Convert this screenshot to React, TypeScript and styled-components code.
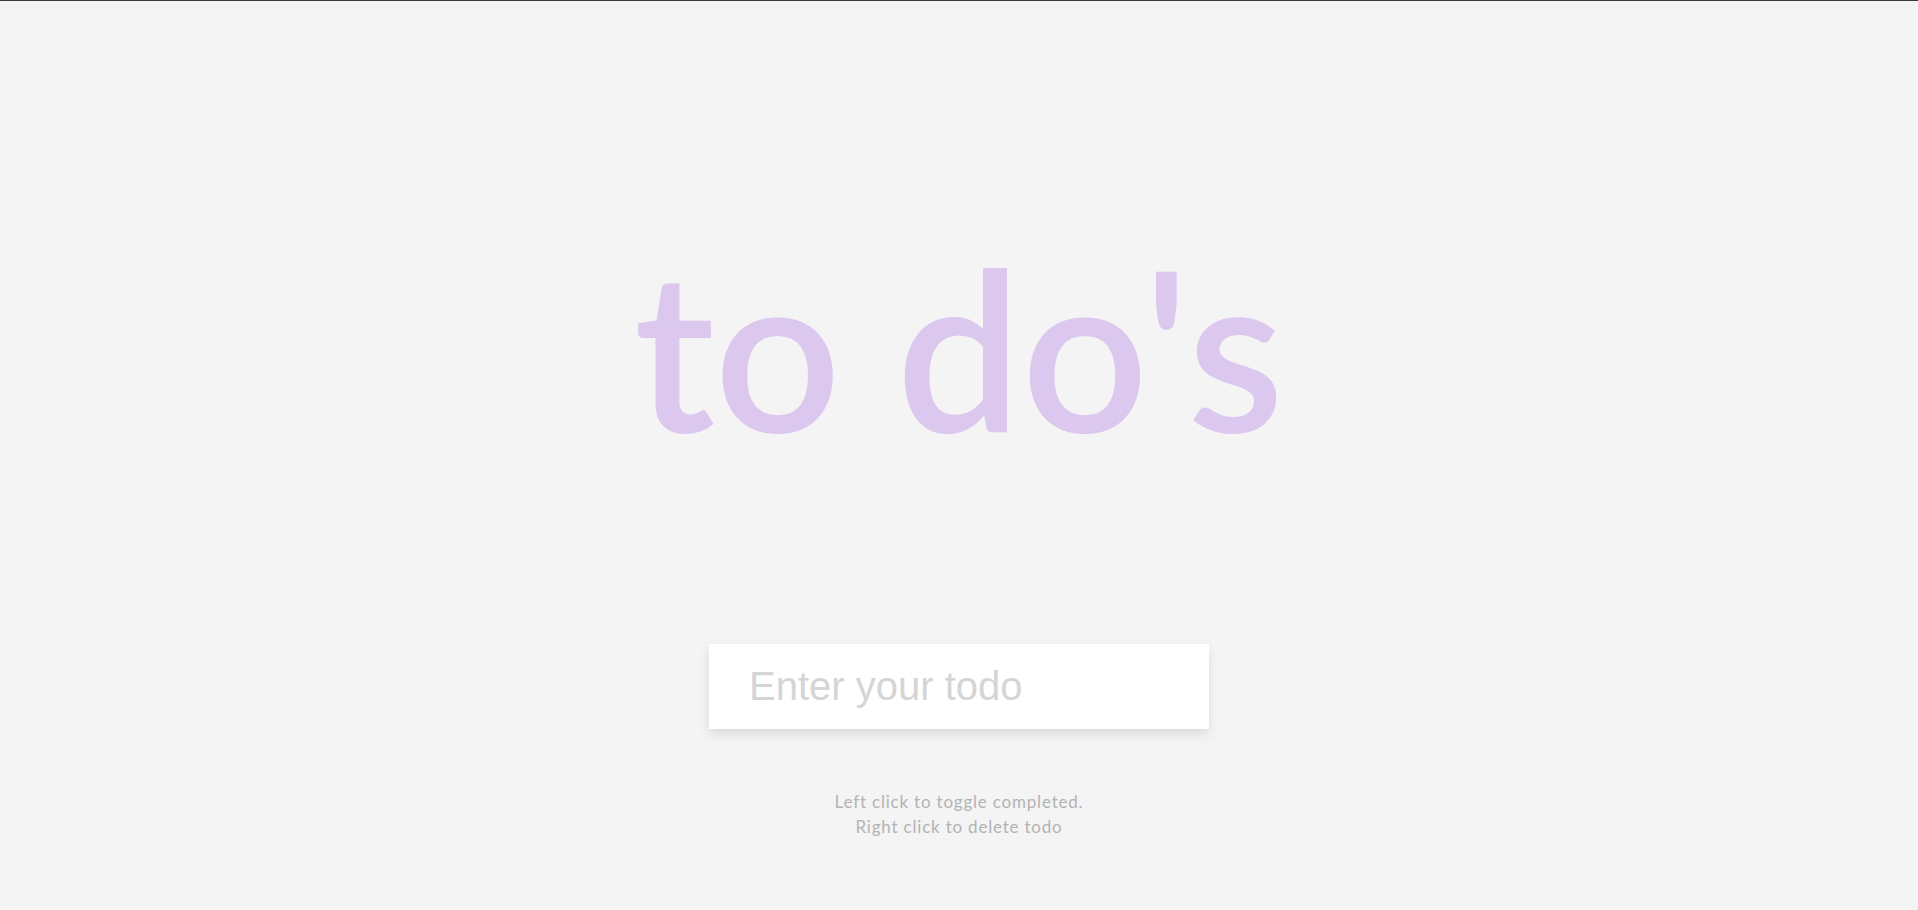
import React from "react";
import styled, { createGlobalStyle } from "styled-components";

const GlobalStyle = createGlobalStyle`
  html, body {
    margin: 0;
    padding: 0;
    background: #f4f4f4;
  }
  body {
    border-top: 1px solid #3a3a3a;
    font-family: "Lato", "Noto Sans", sans-serif;
  }
  * { box-sizing: border-box; }
`;

const Page = styled.main`
  min-height: 909px;
  display: flex;
  flex-direction: column;
  align-items: center;
  padding-top: 234px;
`;

const Title = styled.h1`
  margin: 0;
  font-family: "Lato", sans-serif;
  font-weight: 600;
  font-size: 222px;
  line-height: 1;
  color: #dcc7ee;
  letter-spacing: 0;
`;

const Form = styled.form`
  margin-top: 187px;
`;

const Input = styled.input`
  width: 500px;
  height: 85px;
  border: none;
  outline: none;
  background: #ffffff;
  padding: 0 40px;
  font-family: "Liberation Sans", Arial, sans-serif;
  font-size: 40px;
  color: #555;
  box-shadow: 0 5px 10px rgba(0, 0, 0, 0.1);
  &::placeholder {
    color: #d5d5d5;
  }
`;

const Hint = styled.p`
  margin: 60px 0 0;
  text-align: center;
  font-family: "Lato", sans-serif;
  font-size: 17px;
  letter-spacing: 0.8px;
  line-height: 25px;
  color: #b3b3b3;
`;

export default function App() {
  return (
    <>
      <GlobalStyle />
      <Page>
        <Title>to do's</Title>
        <Form onSubmit={(e) => e.preventDefault()}>
          <Input type="text" placeholder="Enter your todo" />
        </Form>
        <Hint>
          Left click to toggle completed.
          <br />
          Right click to delete todo
        </Hint>
      </Page>
    </>
  );
}
